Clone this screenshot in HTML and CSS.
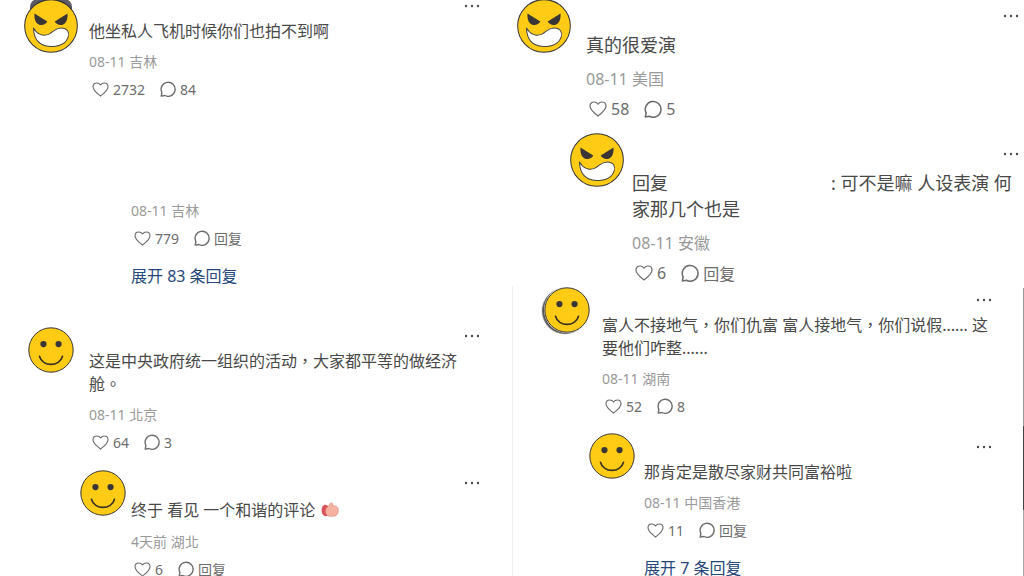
FILE: index.html
```
<!DOCTYPE html>
<html lang="zh-Hant">
  <head>
    <meta charset="utf-8">
    <title>评论</title>
    <meta name="viewport" content="width=device-width, initial-scale=1">

    <link rel="stylesheet" href="styles.css">

  </head>

  <body>

    <svg class="icon-set" aria-hidden="true">
      <symbol id="heart" viewBox="0 0 18 16">
        <path d="M9 15 C6.500 12.800 1 9.200 1 5 C1 2.600 2.800 1 5 1 C6.800 1 8.200 1.900 9 3.200 C9.800 1.900 11.200 1 13 1 C15.200 1 17 2.600 17 5 C17 9.200 11.500 12.800 9 15 Z" fill="none" stroke="currentColor" stroke-width="1.200" stroke-linejoin="round"/>
      </symbol>
      <symbol id="bubble" viewBox="0 0 16 16">
        <path d="M1.200 15.100 L1.900 11.500 A7 7 0 1 1 4.900 14.500 Z" fill="none" stroke="currentColor" stroke-width="1.400" stroke-linejoin="round"/>
      </symbol>
      <symbol id="happy" viewBox="0 0 140 140">
        <circle cx="70" cy="70" r="67.500" fill="#ffcb15" stroke="#333" stroke-width="3"/>
        <circle cx="47" cy="52" r="9.500" fill="#3b3636"/>
        <circle cx="93" cy="52" r="9.500" fill="#3b3636"/>
        <path d="M35 89 C43 122 97 122 105 89" fill="none" stroke="#3b3226" stroke-width="5" stroke-linecap="round"/>
      </symbol>
      <symbol id="angry" viewBox="0 0 160 160">
        <circle cx="80" cy="80" r="78" fill="#ffcb15" stroke="#333" stroke-width="3"/>
        <path d="M31 43 L69 67 C65 76 53 79 45 76 C34 72 30 59 31 43 Z" fill="#3b3636"/>
        <path d="M129 43 L91 67 C95 76 107 79 115 76 C126 72 130 59 129 43 Z" fill="#3b3636"/>
        <path d="M28 86 C38 104 56 112 74 104 C87 98 92 86 110 86 C129 86 135 99 131 112 C124 134 101 141 78 141 C42 139 29 115 28 86 Z" fill="#fff" stroke="#444" stroke-width="3" stroke-linejoin="round"/>
      </symbol>
      <symbol id="dots" viewBox="0 0 16 4">
        <circle cx="2" cy="2" r="1.200" fill="currentColor"/>
        <circle cx="8" cy="2" r="1.200" fill="currentColor"/>
        <circle cx="14" cy="2" r="1.200" fill="currentColor"/>
      </symbol>
    </svg>

    <main class="board">

      <section class="panel panel-jet">
        <article class="comment">
          <div class="avatar photo-behind">
            <svg><use href="#angry"/></svg>
          </div>
          <div class="content">
            <div class="head">
              <button class="more" aria-label="更多"><svg><use href="#dots"/></svg></button>
            </div>
            <p class="text">他坐私人飞机时候你们也拍不到啊</p>
            <p class="meta">08-11 吉林</p>
            <div class="actions">
              <button><svg class="heart"><use href="#heart"/></svg>2732</button>
              <button><svg class="bubble"><use href="#bubble"/></svg>84</button>
            </div>
          </div>
        </article>

        <article class="comment reply">
          <div class="avatar"></div>
          <div class="content">
            <div class="head"></div>
            <p class="text hidden-text"></p>
            <p class="meta">08-11 吉林</p>
            <div class="actions">
              <button><svg class="heart"><use href="#heart"/></svg>779</button>
              <button><svg class="bubble"><use href="#bubble"/></svg>回复</button>
            </div>
            <a class="expand" href="#">展开 83 条回复</a>
          </div>
        </article>
      </section>

      <section class="panel panel-large">
        <article class="comment">
          <div class="avatar">
            <svg><use href="#angry"/></svg>
          </div>
          <div class="content">
            <div class="head">
              <button class="more" aria-label="更多"><svg><use href="#dots"/></svg></button>
            </div>
            <p class="text">真的很爱演</p>
            <p class="meta">08-11 美国</p>
            <div class="actions">
              <button><svg class="heart"><use href="#heart"/></svg>58</button>
              <button><svg class="bubble"><use href="#bubble"/></svg>5</button>
            </div>
          </div>
        </article>

        <article class="comment reply">
          <div class="avatar">
            <svg><use href="#angry"/></svg>
          </div>
          <div class="content">
            <div class="head">
              <button class="more" aria-label="更多"><svg><use href="#dots"/></svg></button>
            </div>
            <p class="text">回复<span class="erased-name"></span>: 可不是嘛 人设表演 何<br>家那几个也是</p>
            <p class="meta">08-11 安徽</p>
            <div class="actions">
              <button><svg class="heart"><use href="#heart"/></svg>6</button>
              <button><svg class="bubble"><use href="#bubble"/></svg>回复</button>
            </div>
          </div>
        </article>
      </section>

      <section class="panel panel-event">
        <article class="comment">
          <div class="avatar">
            <svg><use href="#happy"/></svg>
          </div>
          <div class="content">
            <div class="head">
              <button class="more" aria-label="更多"><svg><use href="#dots"/></svg></button>
            </div>
            <p class="text">这是中央政府统一组织的活动，大家都平等的做经济<br>舱。</p>
            <p class="meta">08-11 北京</p>
            <div class="actions">
              <button><svg class="heart"><use href="#heart"/></svg>64</button>
              <button><svg class="bubble"><use href="#bubble"/></svg>3</button>
            </div>
          </div>
        </article>

        <article class="comment reply">
          <div class="avatar">
            <svg><use href="#happy"/></svg>
          </div>
          <div class="content">
            <div class="head">
              <button class="more" aria-label="更多"><svg><use href="#dots"/></svg></button>
            </div>
            <p class="text emoji-text">终于 看见 一个和谐的评论
              <svg class="thumb" viewBox="0 0 54 44" role="img" aria-label="赞">
                <path d="M14 8 C4 8 1 18 2 28 C3 38 9 43 19 42 L24 12 Z" fill="#d9535a"/>
                <path d="M16 18 C19 14 25 12 27 5 C29 0 36 2 35 8 L34 11 C44 9 52 14 52 24 C52 36 46 42 36 42 L24 42 C13 40 12 26 16 18 Z" fill="#f7b3a2" stroke="#d98578" stroke-width="2"/>
              </svg>
            </p>
            <p class="meta">4天前 湖北</p>
            <div class="actions">
              <button><svg class="heart"><use href="#heart"/></svg>6</button>
              <button><svg class="bubble"><use href="#bubble"/></svg>回复</button>
            </div>
          </div>
        </article>
      </section>

      <section class="panel panel-rich">
        <article class="comment">
          <div class="avatar photo-edge">
            <svg><use href="#happy"/></svg>
          </div>
          <div class="content">
            <div class="head">
              <button class="more" aria-label="更多"><svg><use href="#dots"/></svg></button>
            </div>
            <p class="text">富人不接地气，你们仇富 富人接地气，你们说假...... 这<br>要他们咋整......</p>
            <p class="meta">08-11 湖南</p>
            <div class="actions">
              <button><svg class="heart"><use href="#heart"/></svg>52</button>
              <button><svg class="bubble"><use href="#bubble"/></svg>8</button>
            </div>
          </div>
        </article>

        <article class="comment reply">
          <div class="avatar">
            <svg><use href="#happy"/></svg>
          </div>
          <div class="content">
            <div class="head">
              <button class="more" aria-label="更多"><svg><use href="#dots"/></svg></button>
            </div>
            <p class="text">那肯定是散尽家财共同富裕啦</p>
            <p class="meta">08-11 中国香港</p>
            <div class="actions">
              <button><svg class="heart"><use href="#heart"/></svg>11</button>
              <button><svg class="bubble"><use href="#bubble"/></svg>回复</button>
            </div>
            <a class="expand" href="#">展开 7 条回复</a>
          </div>
        </article>
      </section>

    </main>

  </body>
</html>
```

FILE: styles.css
```
* {
  box-sizing: border-box;
}

body {
  margin: 0;
  background-color: white;
  color: #484848;
  font-family: "Noto Sans", "Noto Sans CJK TC", sans-serif;
  font-size: 16px;
}

p {
  margin: 0;
}

svg {
  display: block;
}

button {
  padding: 0;
  border: none;
  background-color: transparent;
  color: inherit;
  font: inherit;
  cursor: pointer;
}

.icon-set {
  position: absolute;
  width: 0;
  height: 0;
}

/* four comment threads, two by two */
.board {
  display: grid;
  grid-template-columns: 1fr 1fr;
  grid-template-rows: 1fr 1fr;
  height: 100vh;
  overflow: hidden;
}

.panel {
  position: relative;
  min-width: 0;
  min-height: 0;
  padding-right: 32px;
}

.comment {
  display: flex;
}

.reply {
  margin-top: 15px;
}

.avatar {
  position: relative;
  flex: none;
  width: 46px;
  height: 46px;
}

.avatar svg {
  position: relative;
  width: 100%;
  height: 100%;
}

.content {
  flex: 1;
  min-width: 0;
}

.head {
  display: flex;
  align-items: center;
  justify-content: flex-end;
  height: 28px;
}

.more svg {
  width: 16px;
  height: 4px;
}

.text {
  line-height: 23px;
}

.emoji-text {
  line-height: 26px;
}

.hidden-text {
  height: 48px;
}

.erased-name {
  display: inline-block;
  width: 163px;
}

.thumb {
  display: inline-block;
  width: 18px;
  height: 15px;
  margin-left: 2px;
  vertical-align: -1px;
}

.meta {
  margin-top: 9px;
  color: #999;
  font-size: 14px;
  line-height: 20px;
}

.actions {
  display: flex;
  gap: 15px;
  height: 24px;
  margin-top: 5px;
  padding-left: 3px;
  color: #6c6c6c;
  font-size: 14px;
}

.actions button {
  display: flex;
  align-items: center;
  gap: 4px;
}

.heart {
  width: 17px;
  height: 15px;
}

.bubble {
  width: 16px;
  height: 16px;
}

.expand {
  display: block;
  margin-top: 14px;
  color: #26477a;
  line-height: 24px;
  text-decoration: none;
}

/* top left */
.panel-jet {
  margin-top: -8px;
  padding-left: 24px;
}

.panel-jet .avatar {
  width: 54px;
  height: 54px;
  margin: 7px 11px 0 0;
}

.panel-jet .reply {
  padding-left: 42px;
}

.photo-behind::before {
  content: "";
  position: absolute;
  top: 0;
  left: 6px;
  width: 42px;
  height: 24px;
  border-radius: 8px;
  background-color: #5b5b68;
}

/* top right */
.panel-large {
  padding-right: 5px;
  padding-left: 5px;
  font-size: 18px;
}

.panel-large .avatar {
  width: 54px;
  height: 54px;
  margin: -1px 15px 0 0;
}

.panel-large .reply {
  margin-top: 17px;
  padding-left: 53px;
}

.panel-large .reply .avatar {
  margin: -5px 8px 0 0;
}

.panel-large .head {
  height: 32px;
}

.panel-large .text {
  line-height: 26px;
}

.panel-large .meta {
  margin-top: 11px;
  font-size: 16px;
}

.panel-large .actions {
  margin-top: 8px;
  font-size: 16px;
}

.panel-large .heart {
  width: 18px;
  height: 16px;
}

.panel-large .bubble {
  width: 18px;
  height: 18px;
}

/* bottom left */
.panel-event {
  padding-top: 34px;
  padding-left: 28px;
}

.panel-event .avatar {
  margin: 5px 15px 0 0;
}

.panel-event .reply {
  padding-left: 52px;
}

.panel-event .reply .avatar {
  margin: 1px 5px 0 0;
}

/* bottom right */
.panel-rich {
  margin-top: -2px;
  padding-left: 31px;
  border-left: 1px solid #eee;
}

.panel-rich .avatar {
  margin: 1px 12px 0 0;
}

.panel-rich .reply {
  padding-left: 45px;
}

.panel-rich .reply .avatar {
  margin: 0 9px 0 0;
}

.photo-edge {
  border-radius: 50%;
  box-shadow: -2px 1px 1px #555;
}

/* scroll track and its thumb */
.panel-rich::after {
  content: "";
  position: absolute;
  top: 2px;
  right: 0;
  bottom: 0;
  width: 1px;
  background: linear-gradient(#999 0 48%, #444 48% 77%, #aaa 77%);
}
```
